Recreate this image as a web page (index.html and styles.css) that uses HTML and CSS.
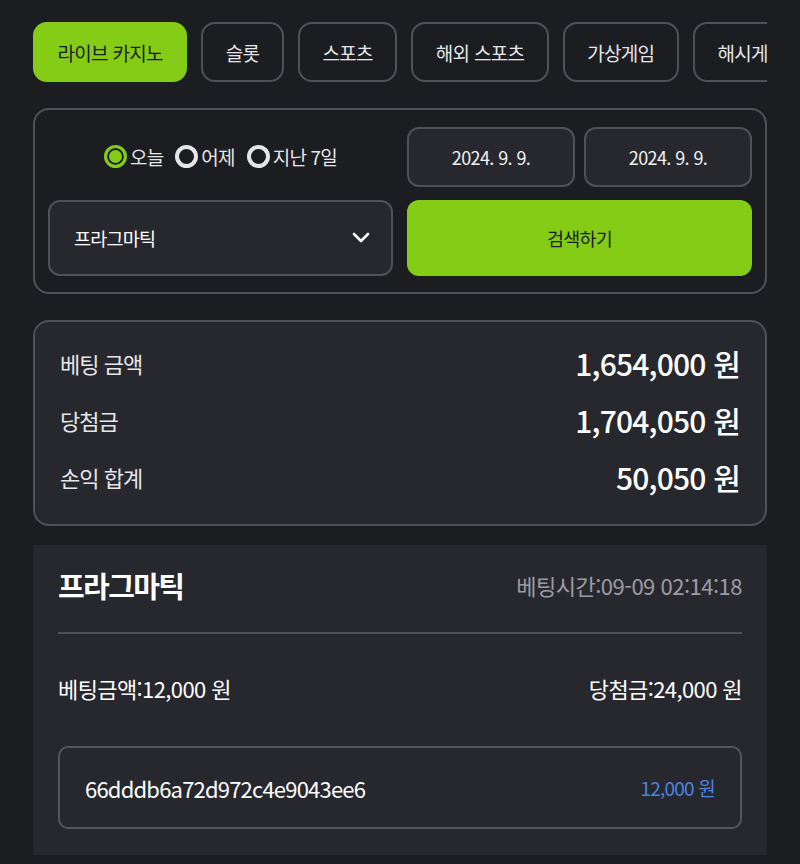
FILE: index.html
```html
<!DOCTYPE html>
<html lang="ko">

<head>
    <meta charset="UTF-8">
    <meta name="viewport" content="width=device-width, initial-scale=1.0">
    <title>베팅내역</title>
    <link rel="stylesheet" href="styles.css">
</head>

<body>
    <div class="container">
        <!-- 게임 탭 -->
        <div class="tabs">
            <button class="tab active">라이브 카지노</button>
            <button class="tab">슬롯</button>
            <button class="tab">스포츠</button>
            <button class="tab">해외 스포츠</button>
            <button class="tab">가상게임</button>
            <button class="tab">해시게임</button>
        </div>

        <!-- 검색 필터 -->
        <div class="filter">
            <div class="radios">
                <label class="radio checked"><span class="dot"></span>오늘</label>
                <label class="radio"><span class="dot"></span>어제</label>
                <label class="radio"><span class="dot"></span>지난 7일</label>
            </div>
            <div class="dates">
                <div class="date-box">2024. 9. 9.</div>
                <div class="date-box">2024. 9. 9.</div>
            </div>
            <div class="select">
                <span>프라그마틱</span>
                <svg width="20" height="12" viewBox="0 0 20 12">
                    <path d="M3 2 L10 9 L17 2" fill="none" stroke="#fff" stroke-width="2.6" stroke-linecap="round" stroke-linejoin="round" />
                </svg>
            </div>
            <button class="search-btn">검색하기</button>
        </div>

        <!-- 합계 -->
        <div class="summary">
            <div class="summary-row">
                <span class="label">베팅 금액</span>
                <span class="value">1,654,000 원</span>
            </div>
            <div class="summary-row">
                <span class="label">당첨금</span>
                <span class="value">1,704,050 원</span>
            </div>
            <div class="summary-row">
                <span class="label">손익 합계</span>
                <span class="value">50,050 원</span>
            </div>
        </div>

        <!-- 베팅 내역 -->
        <div class="bet-card">
            <div class="bet-head">
                <span class="bet-title">프라그마틱</span>
                <span class="bet-time">베팅시간:09-09 02:14:18</span>
            </div>
            <div class="bet-amounts">
                <span>베팅금액:12,000 원</span>
                <span>당첨금:24,000 원</span>
            </div>
            <div class="bet-item">
                <span>66dddb6a72d972c4e9043ee6</span>
                <span class="bet-item-amount">12,000 원</span>
            </div>
        </div>
    </div>
</body>

</html>
```

FILE: styles.css
```css
/* 기본 스타일 */
body {
    font-family: "Noto Sans CJK KR", "Noto Sans", sans-serif;
    background-color: #1c1d21;
    color: #fff;
    margin: 0;
    padding: 0;
}

.container {
    width: 734px;
    margin: 0 auto;
    padding-top: 22px;
    overflow: hidden;
}

/* 탭 */
.tabs {
    display: flex;
    gap: 14px;
    overflow: hidden;
}

.tab {
    flex: none;
    height: 60px;
    padding: 0 22.5px;
    font-family: inherit;
    font-size: 19px;
    letter-spacing: -0.7px;
    color: #e6e6e8;
    background-color: transparent;
    border: 2px solid #505157;
    border-radius: 14px;
}

.tab.active {
    background-color: #84cc16;
    border-color: #84cc16;
    color: #1c1d21;
}

/* 필터 */
.filter {
    margin-top: 26px;
    padding: 17px 13px 16px;
    border: 2px solid #505157;
    border-radius: 16px;
    display: grid;
    grid-template-columns: 1fr 1fr;
    column-gap: 14px;
    row-gap: 13px;
}

.radios {
    display: flex;
    justify-content: center;
    align-items: center;
    gap: 12px;
    font-size: 19px;
    letter-spacing: -0.8px;
    padding-bottom: 2px;
}

.radio {
    display: flex;
    align-items: center;
    gap: 3px;
    color: #e6e6e8;
}

.dot {
    width: 15px;
    height: 15px;
    border: 4px solid #e6e6e8;
    border-radius: 50%;
}

.radio.checked .dot {
    border: 3px solid #84cc16;
    width: 17px;
    height: 17px;
    background-color: #84cc16;
    box-shadow: inset 0 0 0 2px #1c1d21;
}

.dates {
    display: flex;
    gap: 9px;
}

.date-box {
    flex: 1;
    height: 56px;
    display: flex;
    align-items: center;
    justify-content: center;
    background-color: #27282e;
    border: 2px solid #505157;
    border-radius: 12px;
    font-size: 18px;
    letter-spacing: -0.6px;
    color: #f0f0f2;
}

.select {
    height: 72px;
    padding: 0 20px 0 24px;
    display: flex;
    align-items: center;
    justify-content: space-between;
    background-color: #27282e;
    border: 2px solid #505157;
    border-radius: 12px;
    font-size: 18.5px;
    letter-spacing: -0.8px;
}

.search-btn {
    height: 76px;
    font-family: inherit;
    font-size: 18.5px;
    letter-spacing: -0.8px;
    color: #1c1d21;
    background-color: #84cc16;
    border: none;
    border-radius: 12px;
}

/* 합계 */
.summary {
    margin-top: 26px;
    padding: 12px 25px 19px 25px;
    background-color: #27282e;
    border: 2px solid #505157;
    border-radius: 16px;
}

.summary-row {
    height: 57px;
    display: flex;
    align-items: center;
    justify-content: space-between;
}

.label {
    font-size: 22px;
    letter-spacing: -1px;
    color: #e6e6e8;
}

.value {
    font-size: 30px;
    font-weight: 500;
    letter-spacing: -0.8px;
}

/* 베팅 카드 */
.bet-card {
    margin-top: 19px;
    padding: 19px 25px 26px;
    background-color: #27282e;
}

.bet-head {
    display: flex;
    align-items: center;
    justify-content: space-between;
    padding-bottom: 26px;
    border-bottom: 2px solid #505157;
}

.bet-title {
    font-size: 29px;
    font-weight: 700;
    letter-spacing: -1.6px;
}

.bet-time {
    font-size: 22px;
    letter-spacing: -0.5px;
    color: #9c9ca2;
}

.bet-amounts {
    display: flex;
    justify-content: space-between;
    align-items: center;
    height: 108px;
    padding-bottom: 4px;
    font-size: 22px;
    letter-spacing: -0.6px;
}

.bet-item {
    height: 79px;
    padding: 0 25px;
    display: flex;
    align-items: center;
    justify-content: space-between;
    border: 2px solid #55565c;
    border-radius: 10px;
    font-size: 22px;
    letter-spacing: -0.8px;
}

.bet-item-amount {
    font-size: 19px;
    letter-spacing: -0.8px;
    color: #4b82e0;
}
```
